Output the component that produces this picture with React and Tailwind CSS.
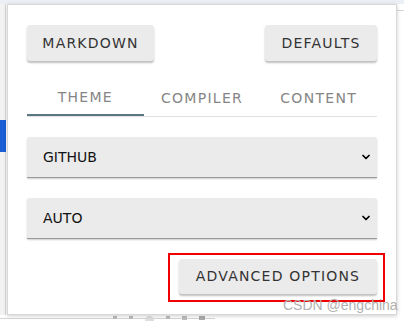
import React from "react";
import { ChevronDown } from "lucide-react";

const Btn = ({ children, className = "" }) => (
  <button
    className={`bg-[#ebebeb] rounded-[3px] shadow-[0_2px_2px_rgba(0,0,0,0.25)] text-[14px] tracking-[1.2px] text-[#333] ${className}`}
  >
    {children}
  </button>
);

const Select = ({ value }) => (
  <div className="h-[41px] bg-[#ebebeb] rounded-t-[3px] border-b border-[#9a9a9a] shadow-[0_1px_2px_rgba(0,0,0,0.2)] flex items-center justify-between pl-4 pr-[5px]">
    <span className="text-[14px] text-[#111]">{value}</span>
    <ChevronDown size={12} strokeWidth={3.5} className="text-black" />
  </div>
);

const Tab = ({ label, active }) => (
  <div
    className={`flex-1 h-[35px] flex items-center justify-center text-[14px] tracking-[1.3px] text-[#858585] ${
      active ? "border-b-2 border-[#5b7685]" : ""
    }`}
  >
    {label}
  </div>
);

export default function App() {
  return (
    <div
      className="relative w-[404px] h-[324px] overflow-hidden bg-white"
      style={{ fontFamily: '"DejaVu Sans", Verdana, sans-serif' }}
    >
      <div className="absolute top-0 left-0 w-full h-[4px] bg-[#eceff5]" />
      <div className="absolute top-[4px] left-0 w-[6px] h-[311px] bg-[#f3f3f3] border-r border-[#d9d9d9]" />
      <div className="absolute top-[120px] left-0 w-[6px] h-[32px] bg-[#1a5fd6]" />
      <div className="absolute bottom-[5px] left-0 w-[215px] h-px bg-[#d6d6d6]" />
      <div className="absolute top-[10px] right-0 w-[7px] h-px bg-[#d6d6d6]" />
      <div className="absolute bottom-[3px] left-[113px] flex gap-[12px]">
        <span className="w-[4px] h-[3px] bg-[#bbb]" />
        <span className="w-[4px] h-[3px] bg-[#bbb]" />
        <span className="w-[9px] h-[5px] rounded-t-full bg-[#ddd]" />
        <span className="w-[4px] h-[3px] bg-[#bbb]" />
        <span className="w-[5px] h-[4px] bg-[#bbb]" />
        <span className="w-[6px] h-[4px] bg-[#aaa]" />
      </div>

      <div className="relative ml-[7px] mt-[4px] w-[390px] h-[311px] bg-white border border-[#d8d8d8] shadow-[0_1px_4px_rgba(0,0,0,0.2)] px-[19px] pt-[20px]">
        <div className="flex justify-between">
          <Btn className="w-[127px] h-[36px]">MARKDOWN</Btn>
          <Btn className="w-[112px] h-[36px]">DEFAULTS</Btn>
        </div>

        <div className="mt-[20px] flex border-b border-[#e0e0e0]">
          <Tab label="THEME" active />
          <Tab label="COMPILER" />
          <Tab label="CONTENT" />
        </div>

        <div className="mt-[20px] flex flex-col gap-[20px]">
          <Select value="GITHUB" />
          <Select value="AUTO" />
        </div>

        <div className="mt-[20px] flex justify-end">
          <Btn className="w-[198px] h-[35px]">ADVANCED OPTIONS</Btn>
        </div>
      </div>

      <div className="absolute left-[168px] top-[253px] w-[217px] h-[49px] border-2 border-[#f00000]" />
      <div
        className="absolute left-[283px] top-[297px] whitespace-nowrap text-[14px] leading-[17px] text-[#b0b0b0]"
        style={{ fontFamily: '"Liberation Sans", Arial, sans-serif' }}
      >
        CSDN @engchina
      </div>
    </div>
  );
}
